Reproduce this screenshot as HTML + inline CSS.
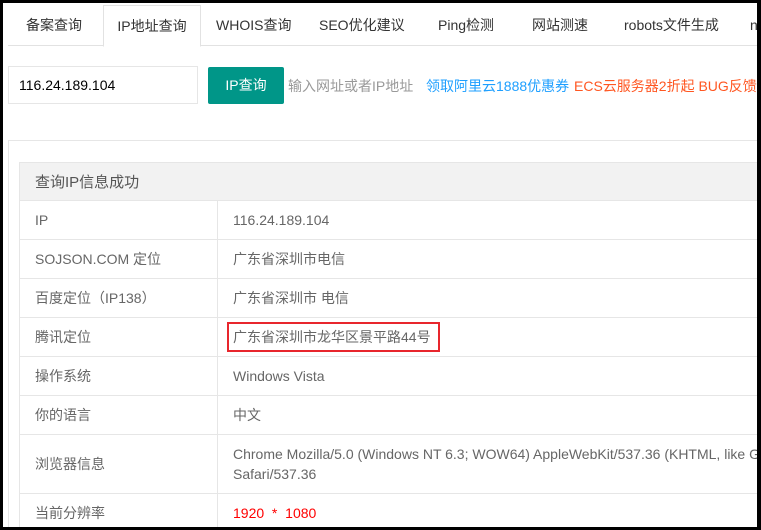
<!DOCTYPE html>
<html><head><meta charset="utf-8"><style>
*{margin:0;padding:0;box-sizing:border-box}
html,body{width:761px;height:530px;overflow:hidden;background:#000}
body{font-family:"Liberation Sans","Noto Sans CJK SC",sans-serif;font-size:14px;color:#333}
#pg{position:absolute;left:3px;top:3px;width:754px;height:524px;background:#fff;overflow:hidden}
.tabs{position:absolute;left:5px;top:0;width:760px;height:43px;border-bottom:1px solid #e2e2e2}
.tab{position:absolute;top:2px;height:41px;line-height:41px;font-size:14px;color:#333}
.act{border:1px solid #e2e2e2;border-bottom:1px solid #fff;background:#fff;height:42px;text-align:center}
.inp{position:absolute;left:5px;top:63px;width:190px;height:38px;border:1px solid #e6e6e6;padding-left:10px;line-height:36px;color:#000}
.btn{position:absolute;left:205px;top:64px;width:76px;height:37px;background:#009688;color:#fff;text-align:center;line-height:37px;border-radius:2px}
.hint{position:absolute;left:285px;top:73px;color:#999}
.ad{position:absolute;top:73px}
.panel{position:absolute;left:5px;top:137px;width:760px;height:400px;border:1px solid #e6e6e6}
table{position:absolute;left:10px;top:21px;border-collapse:collapse;width:760px;table-layout:fixed}
td{border:1px solid #e6e6e6;height:39px;padding-left:15px;color:#666;font-size:14px}
td.b{padding-left:15px}
.hd td{background:#f2f2f2;font-size:15px;color:#555;height:38px}
</style></head><body><div id="pg">
<div class="tabs">
<div class="tab" style="left:18px">备案查询</div>
<div class="tab act" style="left:95px;width:98px">IP地址查询</div>
<div class="tab" style="left:208px">WHOIS查询</div>
<div class="tab" style="left:311px">SEO优化建议</div>
<div class="tab" style="left:430px">Ping检测</div>
<div class="tab" style="left:524px">网站测速</div>
<div class="tab" style="left:616px">robots文件生成</div>
<div class="tab" style="left:742px">n</div>
</div>
<div class="inp">116.24.189.104</div>
<div class="btn">IP查询</div>
<div class="hint">输入网址或者IP地址</div>
<div class="ad" style="left:423px;color:#1E9FFF">领取阿里云1888优惠券</div>
<div class="ad" style="left:571px;color:#FF5722">ECS云服务器2折起 BUG反馈</div>
<div class="panel">
<table>
<colgroup><col style="width:198px"><col style="width:562px"></colgroup>
<tr class="hd"><td colspan="2">查询IP信息成功</td></tr>
<tr><td>IP</td><td class="b">116.24.189.104</td></tr>
<tr><td>SOJSON.COM 定位</td><td class="b">广东省深圳市电信</td></tr>
<tr><td>百度定位（IP138）</td><td class="b">广东省深圳市 电信</td></tr>
<tr><td>腾讯定位</td><td class="b" style="position:relative">广东省深圳市龙华区景平路44号<div style="position:absolute;left:9px;top:4px;width:213px;height:30px;border:2px solid #e8262d"></div></td></tr>
<tr><td>操作系统</td><td class="b">Windows Vista</td></tr>
<tr><td>你的语言</td><td class="b">中文</td></tr>
<tr><td style="height:59px">浏览器信息</td><td class="b" style="line-height:20px;white-space:nowrap;overflow:hidden">Chrome Mozilla/5.0 (Windows NT 6.3; WOW64) AppleWebKit/537.36 (KHTML, like Gecko)<br>Safari/537.36</td></tr>
<tr><td>当前分辨率</td><td class="b" style="color:#f00">1920 &nbsp;* &nbsp;1080</td></tr>
</table>
</div>
</div></body></html>
